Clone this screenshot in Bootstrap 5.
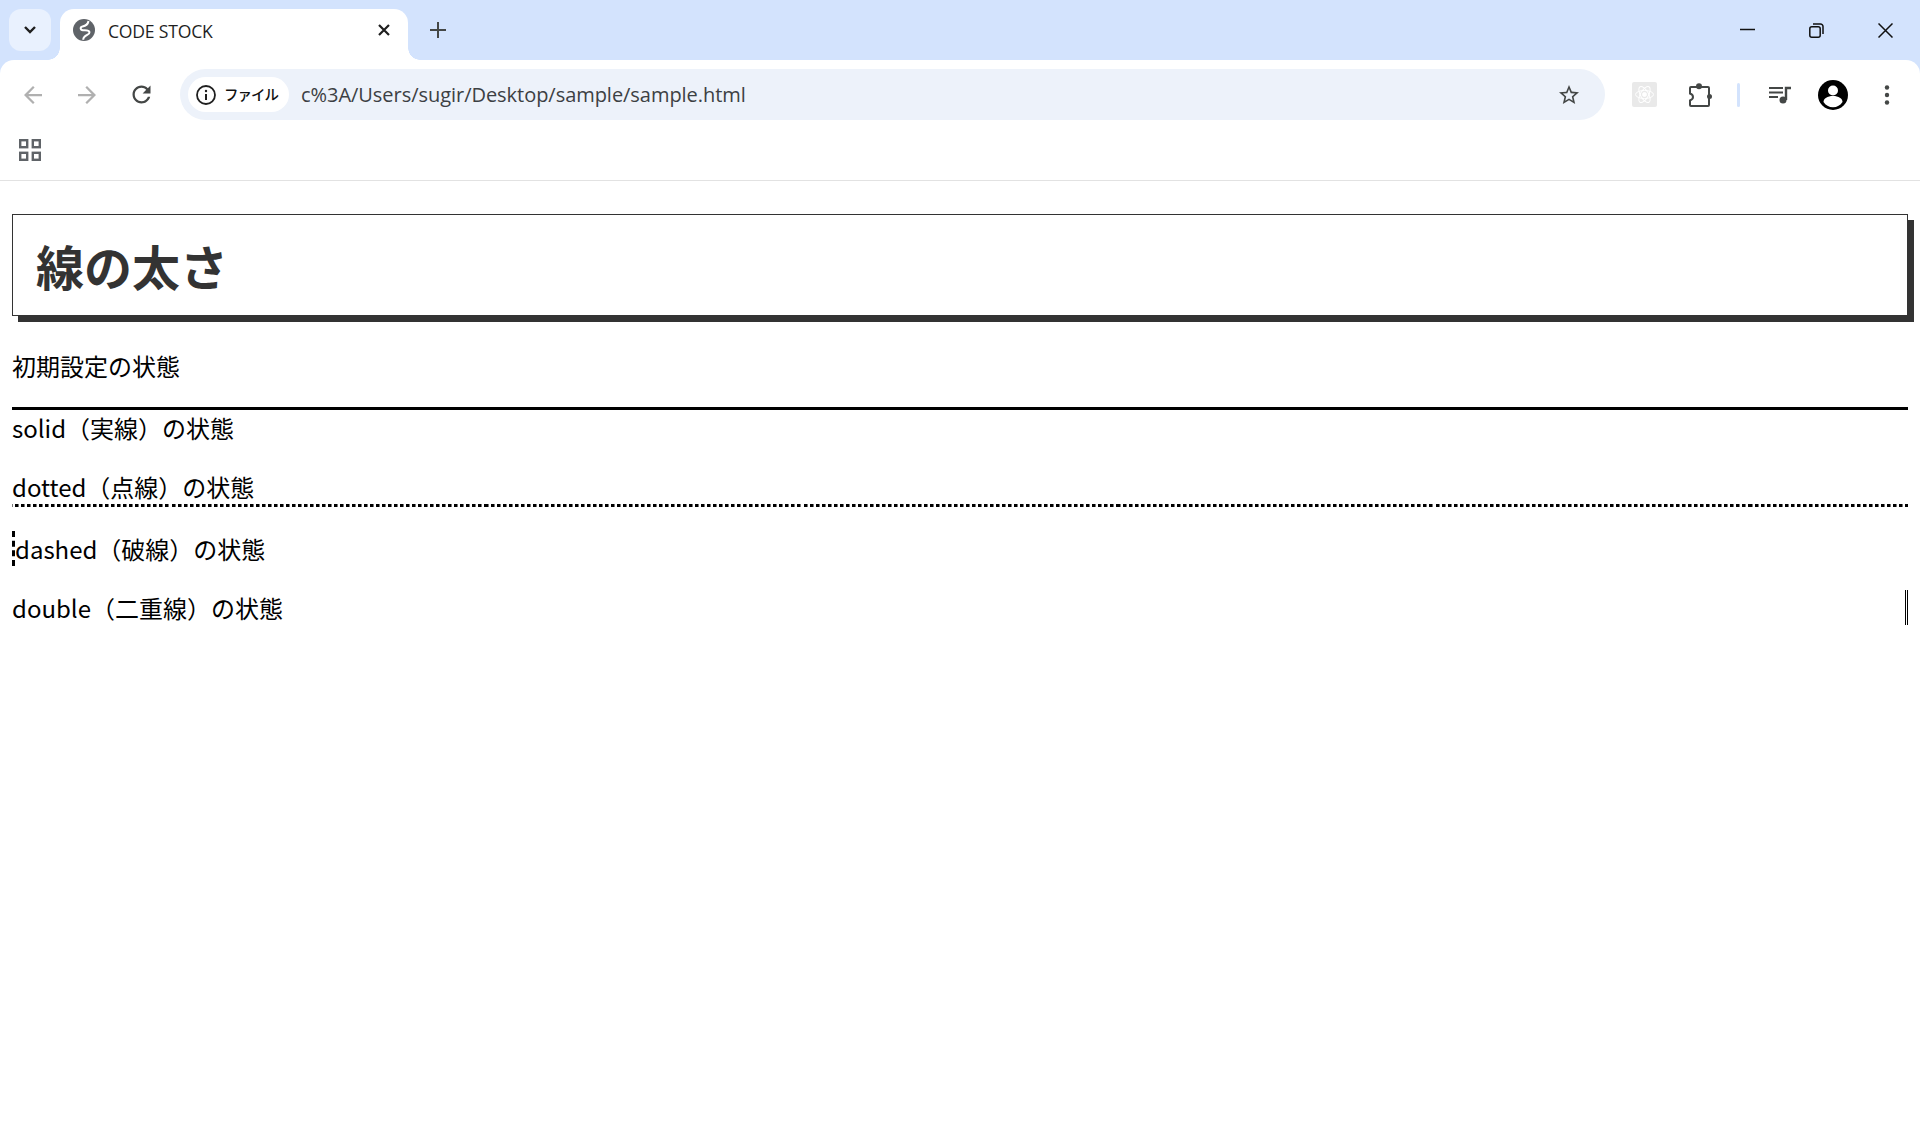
<!DOCTYPE html>
<html lang="ja">
<head>
<meta charset="utf-8">
<title>CODE STOCK</title>
<link href="https://cdn.jsdelivr.net/npm/bootstrap@5.3.0/dist/css/bootstrap.min.css" rel="stylesheet">
<style>
body{background:#fff;color:#000;font-family:"Noto Sans CJK JP","Noto Sans",sans-serif;overflow:hidden}
svg{display:block;flex:none}
.strip{height:60px;background:#d3e3fd;padding-top:9px}
.tabsearch{width:42px;height:42px;margin-left:9px;background:#e9f1fe;border-radius:12px}
.tabitem{position:relative;width:348px;height:51px;margin-left:9px;background:#fff;border-radius:14px 14px 0 0;padding:0 0 9px 13px;color:#1f1f1f}
.tabitem::before,.tabitem::after{content:"";position:absolute;bottom:0;width:12px;height:12px;background:radial-gradient(circle at 0 0,transparent 11.5px,#fff 12px)}
.tabitem::before{left:-12px}
.tabitem::after{right:-12px;background:radial-gradient(circle at 100% 0,transparent 11.5px,#fff 12px)}
.tabtitle{font:17.6px/1 "Open Sans","Noto Sans",sans-serif;margin:3px 0 0 13px;letter-spacing:-.22px}
.tabclose{margin-left:auto;margin-right:18px}
.newtab{margin-left:22px;align-self:center;margin-top:-9px}
.winbtns{margin-left:auto;margin-top:-9px;padding-right:27px;gap:54px;height:60px}
.toolrow{height:73px;background:#fff;border-radius:14px 14px 0 0;padding:0 0 4px 24px}
.stripback{background:#d3e3fd}
.navgap1{margin-left:36px}
.navgap2{margin-left:32px}
.addr{width:1425px;height:51px;margin-left:25px;background:#edf2fa;border-radius:26px;padding-left:8px;padding-right:24px}
.chip{width:101px;height:35px;background:#fff;border-radius:18px;padding-left:8px;color:#111;font:500 14.500px/1 "Noto Sans CJK JP",sans-serif}
.chip span{margin-left:8px;letter-spacing:-1px}
.urltext{margin-left:12px;font:20px/1 "Open Sans","Noto Sans",sans-serif;letter-spacing:-.04px;color:#3c4043}
.staricon{margin-left:auto}
.extbox{width:25px;height:25px;margin-left:27px;background:#e9e9e9;border-radius:2px}
.puzzle{margin-left:31px}
.divline{width:3px;height:24px;margin-left:25px;background:#d3e3fd;border-radius:2px}
.mediaicon{margin-left:28px}
.avatar{margin-left:26px}
.menuicon{margin-left:36px}
.bookrow{height:48px;border-bottom:1px solid #e2e2e2;padding:0 0 13px 19px}
.pagebox{padding:33px 12px 0}
.headbox{margin:0 0 32px;padding:15px 23px;border:1px solid #333;box-shadow:6px 6px 0 #333;color:#333;font:700 48px/70px "Noto Sans CJK JP",sans-serif}
.linep{margin:0 0 24px;font-size:24px;line-height:35px;color:#000}
.b-solid{border-top:3px solid #000}
.b-dotted{border-bottom:3px solid #000;border-image:repeating-linear-gradient(90deg,#000 0 3px,#777 3px 4px,transparent 4px 6px) 3}
.b-dashed{border-left:3px dashed #000}
.b-double{border-right:3px double #000}
</style>
</head>
<body>
<div class="stripback">
<div class="strip d-flex">
  <div class="tabsearch d-flex align-items-center justify-content-center">
    <svg width="14" height="10" viewBox="0 0 14 10"><path d="M2 2l5 5 5-5" fill="none" stroke="#1f1f1f" stroke-width="2.400"/></svg>
  </div>
  <div class="tabitem d-flex align-items-center">
    <svg width="22" height="22" viewBox="0 0 22 22"><circle cx="11" cy="11" r="11" fill="#5f6368"/><path d="M15.500 2C15 5 12 7 9.500 7.500 7 8 7 11 10 11.200c3 .2 6-.5 6.500 2 .4 2-3 2.500-5 4.500-1 1-1.300 2-1.300 3" fill="none" stroke="#fff" stroke-width="2"/></svg>
    <span class="tabtitle">CODE STOCK</span>
    <svg class="tabclose" width="12" height="12" viewBox="0 0 12 12"><path d="M1 1l10 10M11 1L1 11" stroke="#1f1f1f" stroke-width="2.200"/></svg>
  </div>
  <svg class="newtab" width="16" height="16" viewBox="0 0 16 16"><path d="M8 0v16M0 8h16" stroke="#444746" stroke-width="2"/></svg>
  <div class="winbtns d-flex align-items-center">
    <svg width="15" height="15" viewBox="0 0 15 15"><path d="M0 6.500h15" stroke="#111" stroke-width="1.500"/></svg>
    <svg width="15" height="15" viewBox="0 0 15 15"><rect x=".8" y="3.800" width="10.400" height="10.400" rx="2" fill="none" stroke="#111" stroke-width="1.500"/><path d="M4 1h7.500A2.500 2.500 0 0 1 14 3.500V11" fill="none" stroke="#111" stroke-width="1.500"/></svg>
    <svg width="15" height="15" viewBox="0 0 15 15"><path d="M.5.500l14 14M14.500.500l-14 14" stroke="#111" stroke-width="1.500"/></svg>
  </div>
</div>
<div class="toolrow d-flex align-items-center">
  <svg width="18" height="18" viewBox="4 4 16 16"><path d="M20 11H7.830l5.590-5.590L12 4l-8 8 8 8 1.410-1.410L7.830 13H20v-2z" fill="#b0b0b0"/></svg>
  <svg class="navgap1" width="18" height="18" viewBox="4 4 16 16"><path d="M4 11h12.170l-5.590-5.590L12 4l8 8-8 8-1.410-1.410L16.170 13H4v-2z" fill="#b0b0b0"/></svg>
  <svg class="navgap2" width="27" height="27" viewBox="0 0 24 24"><path d="M17.650 6.350C16.200 4.900 14.210 4 12 4c-4.420 0-7.990 3.580-7.990 8s3.570 8 7.990 8c3.730 0 6.840-2.550 7.730-6h-2.080c-.82 2.330-3.040 4-5.650 4-3.310 0-6-2.690-6-6s2.690-6 6-6c1.660 0 3.140.69 4.220 1.780L13 11h7V4l-2.350 2.350z" fill="#444746"/></svg>
  <div class="addr d-flex align-items-center">
    <div class="chip d-flex align-items-center">
      <svg width="20" height="20" viewBox="0 0 20 20"><circle cx="10" cy="10" r="9" fill="none" stroke="#1f1f1f" stroke-width="1.800"/><path d="M10 9v6" stroke="#1f1f1f" stroke-width="2"/><circle cx="10" cy="6" r="1.200" fill="#1f1f1f"/></svg>
      <span>ファイル</span>
    </div>
    <span class="urltext">c%3A/Users/sugir/Desktop/sample/sample.html</span>
    <svg class="staricon" width="24" height="24" viewBox="0 0 24 24"><path d="M22 9.240l-7.190-.62L12 2 9.190 8.630 2 9.240l5.460 4.730L5.820 21 12 17.270 18.180 21l-1.630-7.030L22 9.240zM12 15.400l-3.760 2.270 1-4.280-3.320-2.880 4.380-.38L12 6.100l1.710 4.040 4.380.38-3.320 2.880 1 4.280L12 15.400z" fill="#444746"/></svg>
  </div>
  <div class="extbox d-flex align-items-center justify-content-center">
    <svg width="21" height="21" viewBox="0 0 21 21" fill="none" stroke="#fff" stroke-width="1"><ellipse cx="10.500" cy="10.500" rx="9" ry="4"/><ellipse cx="10.500" cy="10.500" rx="9" ry="4" transform="rotate(60 10.500 10.500)"/><ellipse cx="10.500" cy="10.500" rx="9" ry="4" transform="rotate(120 10.500 10.500)"/><circle cx="10.500" cy="10.500" r="2" fill="#fff"/></svg>
  </div>
  <svg class="puzzle" width="24" height="24" viewBox="0 0 24 24"><path d="M3 4H20a1 1 0 0 1 1 1V22a1 1 0 0 1-1 1H3a1 1 0 0 1-1-1v-4.500c2-.8 3-2 3-3.500s-1-2.700-3-3.500V5a1 1 0 0 1 1-1z" fill="none" stroke="#444746" stroke-width="2"/><circle cx="11" cy="3.200" r="3" fill="#444746"/><circle cx="21.500" cy="13.500" r="2.500" fill="#444746"/></svg>
  <div class="divline"></div>
  <svg class="mediaicon" width="24" height="18" viewBox="0 0 24 18"><path d="M1 2h14M1 6.500h14M1 11h9" stroke="#444746" stroke-width="1.800"/><path d="M18 14V2h5" fill="none" stroke="#444746" stroke-width="2.400"/><circle cx="15" cy="14" r="3.500" fill="#444746"/></svg>
  <svg class="avatar" width="30" height="30" viewBox="0 0 30 30"><circle cx="15" cy="15" r="15" fill="#000"/><circle cx="15" cy="10.500" r="5" fill="#fff"/><path d="M5.500 22c0-3.500 4-6 9.500-6s9.500 2.500 9.500 6c-2 3.200-5.500 5.300-9.500 5.300S7.500 25.200 5.500 22z" fill="#fff"/></svg>
  <svg class="menuicon" width="6" height="20" viewBox="0 0 6 20"><circle cx="3" cy="2.500" r="2.200" fill="#444746"/><circle cx="3" cy="10" r="2.200" fill="#444746"/><circle cx="3" cy="17.500" r="2.200" fill="#444746"/></svg>
</div>
</div>
<div class="bookrow d-flex align-items-center">
  <svg width="22" height="22" viewBox="0 0 22 22" fill="none" stroke="#5f6368" stroke-width="2.400"><rect x="1.200" y="1.200" width="7" height="7"/><rect x="13.800" y="1.200" width="7" height="7"/><rect x="1.200" y="13.800" width="7" height="7"/><rect x="13.800" y="13.800" width="7" height="7"/></svg>
</div>
<main class="pagebox">
  <h1 class="headbox">線の太さ</h1>
  <p class="linep">初期設定の状態</p>
  <p class="linep b-solid">solid（実線）の状態</p>
  <p class="linep b-dotted">dotted（点線）の状態</p>
  <p class="linep b-dashed">dashed（破線）の状態</p>
  <p class="linep b-double">double（二重線）の状態</p>
</main>
<script src="https://cdn.jsdelivr.net/npm/bootstrap@5.3.0/dist/js/bootstrap.bundle.min.js"></script>
</body>
</html>
